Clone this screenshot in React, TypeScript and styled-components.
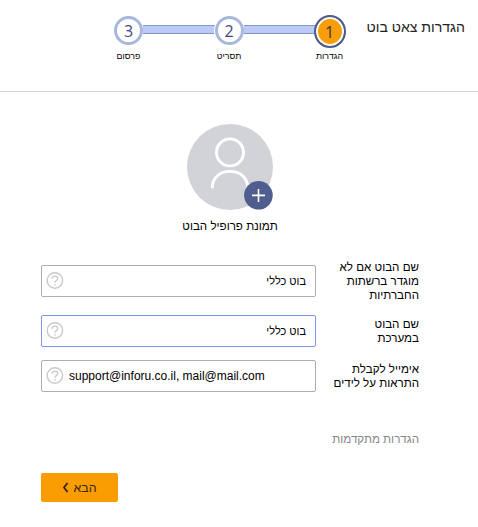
import React from "react";
import styled, { createGlobalStyle } from "styled-components";

const GlobalStyle = createGlobalStyle`
  * { box-sizing: border-box; }
  body { margin: 0; background: #fff; overflow: hidden; }
`;

const Page = styled.div`
  width: 478px;
  height: 527px;
  background: #fff;
  color: #000;
  font-family: "Liberation Sans", sans-serif;
  font-size: 11.6px;
`;

const Header = styled.header`
  display: flex;
  justify-content: space-between;
  height: 92px;
  padding: 15px 13px 0 112px;
  border-bottom: 1px solid #d3d3dc;
`;

const Title = styled.h1`
  margin: 1px 0 0;
  font-size: 14.1px;
  font-weight: 400;
  line-height: 22px;
  white-space: nowrap;
  color: #222;
`;

const Stepper = styled.div`
  display: flex;
  align-items: flex-start;
`;

const Step = styled.div`
  display: flex;
  flex-direction: column;
  align-items: center;
  width: 33px;
`;

const Bullet = styled.div`
  display: flex;
  align-items: flex-start;
  justify-content: center;
  height: 33px;
`;

const Circle = styled.div<{ $active?: boolean }>`
  display: flex;
  align-items: center;
  justify-content: center;
  width: ${(p) => (p.$active ? 32 : 29)}px;
  height: ${(p) => (p.$active ? 33 : 29)}px;
  margin-top: ${(p) => (p.$active ? 0 : 1)}px;
  border: ${(p) => (p.$active ? "2px solid #4b5a8f" : "3px solid #a6b8dc")};
  border-radius: 50%;
  background: ${(p) => (p.$active ? "#f99d0b" : "#fff")};
  box-shadow: ${(p) => (p.$active ? "inset 0 0 0 2px #fff" : "0 0 0 1px #fff")};
  color: ${(p) => (p.$active ? "#3d3437" : "#3f4a86")};
  font-family: "Open Sans", sans-serif;
  font-size: 16px;
  line-height: 20px;
`;

const StepLabel = styled.span`
  margin-top: 1px;
  font-size: 8.8px;
  line-height: 14px;
  white-space: nowrap;
`;

const Connector = styled.div`
  width: 71.5px;
  height: 9px;
  margin: 10px -2px 0;
  border: solid #8496c4;
  border-width: 1px 0;
  background: #bccaf9;
`;

const Profile = styled.section`
  display: flex;
  flex-direction: column;
  align-items: center;
  width: 100px;
  margin: 31px 0 0 180px;
`;

const Caption = styled.span`
  margin-top: 6px;
  line-height: 18px;
  white-space: nowrap;
`;

const Form = styled.form`
  display: flex;
  flex-direction: column;
  gap: 13px;
  margin: 25px 59px 0 41px;
`;

const Row = styled.div`
  display: flex;
  align-items: center;
  justify-content: space-between;
`;

const Label = styled.label`
  line-height: 14px;
  text-align: right;
  white-space: nowrap;
`;

const Field = styled.div<{ $focused?: boolean }>`
  display: flex;
  align-items: center;
  width: 275px;
  height: 32px;
  padding: 0 9px 0 4px;
  border: 1px solid ${(p) => (p.$focused ? "#7c95ee" : "#adadad")};
  border-radius: 2px;
`;

const Input = styled.input<{ $hebrew: boolean }>`
  flex: 1;
  min-width: 0;
  margin-left: 5px;
  padding: 0;
  border: 0;
  outline: 0;
  background: transparent;
  color: #000;
  font-family: "Liberation Sans", sans-serif;
  font-size: ${(p) => (p.$hebrew ? 11 : 12)}px;
`;

const Advanced = styled.a`
  display: block;
  margin: 38px 59px 0 0;
  color: #858585;
  line-height: 18px;
  text-align: right;
`;

const Next = styled.button`
  display: flex;
  align-items: center;
  justify-content: center;
  gap: 4px;
  width: 77px;
  height: 29px;
  margin: 25px 0 0 41px;
  padding: 0;
  border: 0;
  border-radius: 2px;
  background: #f99d03;
  color: #33270f;
  font: 12.4px "Liberation Sans", sans-serif;
`;

const HelpIcon = styled.svg`
  flex: none;
  margin-bottom: 1px;
`;

const Avatar = () => (
  <svg width="88" height="88" viewBox="0 0 88 88">
    <circle cx="44" cy="44" r="43" fill="#d2d3d8" />
    <circle cx="44" cy="29.4" r="13.5" fill="none" stroke="#fff" strokeWidth="2.9" />
    <path d="M26.2 65.2C26.2 55 33.5 48.4 44 48.4S61.8 55 61.8 65.2" fill="none" stroke="#fff" strokeWidth="2.9" />
    <circle cx="72.4" cy="72.3" r="14.3" fill="#505d8f" />
    <path d="M66 72.4h13M72.5 66v13" stroke="#fff" strokeWidth="1.6" />
  </svg>
);

const Help = () => (
  <HelpIcon width="18" height="17" viewBox="0 0 18 17" fill="none" stroke="#c9c9c9" strokeWidth="1.4">
    <circle cx="8.9" cy="8.5" r="7.7" />
    <path d="M6.1 6.8C6.1 3.3 11.8 3.3 11.8 6.4C11.8 8.4 9 8.3 9 10.7M9 11.9v1.5" />
  </HelpIcon>
);

const Chevron = () => (
  <svg width="7" height="11" viewBox="0 0 7 11" fill="none" stroke="#33270f" strokeWidth="1.8">
    <path d="M5.5 1L2 5.5L5.5 10" />
  </svg>
);

const steps = [
  { n: 3, label: "פרסום" },
  { n: 2, label: "תסריט" },
  { n: 1, label: "הגדרות", active: true },
];

const fields = [
  { lines: ["שם הבוט אם לא", "מוגדר ברשתות", "החברתיות"], value: "בוט כללי", dir: "rtl" },
  { lines: ["שם הבוט", "במערכת"], value: "בוט כללי", dir: "rtl", focused: true },
  { lines: ["אימייל לקבלת", "התראות על לידים"], value: "support@inforu.co.il, mail@mail.com", dir: "ltr" },
];

export default function App() {
  return (
    <Page>
      <GlobalStyle />
      <Header>
        <Stepper>
          {steps.map((s, i) => (
            <React.Fragment key={s.n}>
              {i > 0 && <Connector />}
              <Step>
                <Bullet>
                  <Circle $active={s.active}>{s.n}</Circle>
                </Bullet>
                <StepLabel>{s.label}</StepLabel>
              </Step>
            </React.Fragment>
          ))}
        </Stepper>
        <Title dir="rtl">הגדרות צאט בוט</Title>
      </Header>
      <Profile>
        <Avatar />
        <Caption dir="rtl">תמונת פרופיל הבוט</Caption>
      </Profile>
      <Form>
        {fields.map((f, i) => (
          <Row key={i}>
            <Field $focused={f.focused}>
              <Help />
              <Input dir={f.dir} $hebrew={f.dir === "rtl"} defaultValue={f.value} />
            </Field>
            <Label dir="rtl">
              {f.lines.map((l) => (
                <div key={l}>{l}</div>
              ))}
            </Label>
          </Row>
        ))}
      </Form>
      <Advanced dir="rtl">הגדרות מתקדמות</Advanced>
      <Next type="button">
        <Chevron />
        הבא
      </Next>
    </Page>
  );
}
